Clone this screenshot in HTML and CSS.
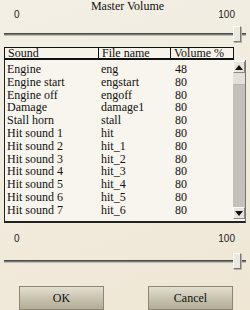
FILE: index.html
```html
<!DOCTYPE html>
<html>
<head>
<meta charset="utf-8"/>
<title>Master Volume</title>
<link rel="stylesheet" href="styles.css">
</head>
<body>
<div class="panel">
  <div class="title">Master Volume</div>
  <div class="labels"><span>0</span><span>100</span></div>
  <div class="slider"><div class="track"></div><div class="thumb"></div></div>

  <div class="grid-head">
    <div class="hcell c1">Sound</div>
    <div class="hcell c2">File name</div>
    <div class="hcell c3">Volume %</div>
  </div>
  <div class="grid-body">
    <div class="rows">
      <div class="row"><span class="c1">Engine</span><span class="c2">eng</span><span class="c3">48</span></div>
      <div class="row"><span class="c1">Engine start</span><span class="c2">engstart</span><span class="c3">80</span></div>
      <div class="row"><span class="c1">Engine off</span><span class="c2">engoff</span><span class="c3">80</span></div>
      <div class="row"><span class="c1">Damage</span><span class="c2">damage1</span><span class="c3">80</span></div>
      <div class="row"><span class="c1">Stall horn</span><span class="c2">stall</span><span class="c3">80</span></div>
      <div class="row"><span class="c1">Hit sound 1</span><span class="c2">hit</span><span class="c3">80</span></div>
      <div class="row"><span class="c1">Hit sound 2</span><span class="c2">hit_1</span><span class="c3">80</span></div>
      <div class="row"><span class="c1">Hit sound 3</span><span class="c2">hit_2</span><span class="c3">80</span></div>
      <div class="row"><span class="c1">Hit sound 4</span><span class="c2">hit_3</span><span class="c3">80</span></div>
      <div class="row"><span class="c1">Hit sound 5</span><span class="c2">hit_4</span><span class="c3">80</span></div>
      <div class="row"><span class="c1">Hit sound 6</span><span class="c2">hit_5</span><span class="c3">80</span></div>
      <div class="row"><span class="c1">Hit sound 7</span><span class="c2">hit_6</span><span class="c3">80</span></div>
    </div>
    <div class="scrollbar">
      <div class="arrow"><svg width="8" height="5" viewBox="0 0 8 5"><path d="M0 5 L4 0 L8 5 Z" fill="#111"/></svg></div>
      <div class="sthumb"></div>
      <div class="strack"></div>
      <div class="arrow"><svg width="8" height="5" viewBox="0 0 8 5"><path d="M0 0 L8 0 L4 5 Z" fill="#111"/></svg></div>
    </div>
  </div>

  <div class="labels low"><span>0</span><span>100</span></div>
  <div class="slider low"><div class="track"></div><div class="thumb"></div></div>

  <div class="buttons">
    <div class="button">OK</div>
    <div class="button">Cancel</div>
  </div>
</div>
</body>
</html>
```

FILE: styles.css
```css
body {
  margin: 0;
  width: 250px;
  height: 310px;
  overflow: hidden;
  background: linear-gradient(160deg, #f3efe5 0%, #f1ebdd 55%, #efe6d4 100%);
  font-family: "Liberation Serif", "Times New Roman", serif;
  font-size: 12px;
  color: #111;
}

.panel {
  padding: 0 4px;
}

.title {
  height: 10px;
  line-height: 12px;
  text-align: center;
  padding-left: 5px;
}

.labels {
  display: flex;
  justify-content: space-between;
  padding: 0 11px 0 10px;
  font-family: "Liberation Sans", Arial, sans-serif;
  font-size: 10px;
  line-height: 9px;
  height: 9px;
  color: #222;
}

.labels.low {
  margin-top: 11px;
}

.slider {
  display: grid;
  align-items: center;
  height: 16px;
  margin-top: 7px;
}

.slider.low {
  margin-top: 10px;
}

.track, .thumb {
  grid-area: 1 / 1;
}

.track {
  height: 1px;
  background: #7d7b76;
  border-top: 1px solid #4a4a4a;
  border-bottom: 1px solid #bdbab1;
}

.thumb {
  justify-self: end;
  margin-right: 5px;
  width: 6px;
  height: 14px;
  background: #ebe8df;
  border: 1px solid;
  border-color: #fff #7a7872 #7a7872 #fff;
  box-shadow: 1px 1px 0 #b5b2aa;
}

.grid-head {
  display: flex;
  margin-top: 5px;
}

.hcell {
  border-top: 1px solid #111;
  border-bottom: 2px solid #111;
  border-right: 1px solid #111;
  background: #f6f3ea;
  height: 10px;
  line-height: 11px;
  padding-left: 3px;
}

.hcell.c1 {
  width: 90px;
  border-left: 1px solid #111;
}

.hcell.c2 {
  width: 68px;
}

.hcell.c3 {
  width: 59px;
}

.grid-body {
  display: flex;
  height: 161px;
  border-left: 1px solid #222;
  border-right: 1px solid #777;
  border-bottom: 2px solid #222;
  background: #f8f5ee;
}

.rows {
  flex: 1;
  padding-top: 3px;
}

.row {
  display: grid;
  grid-template-columns: 93px 72px 63px;
  height: 12.8px;
  line-height: 12.8px;
  white-space: nowrap;
}

.row .c1 {
  padding-left: 2px;
}

.row .c2 {
  padding-left: 3px;
}

.row .c3 {
  padding-left: 5px;
}

.scrollbar {
  display: flex;
  flex-direction: column;
  width: 12px;
  margin-top: 1px;
  margin-bottom: 2px;
  background: #c3c1b9;
}

.arrow {
  display: flex;
  align-items: center;
  justify-content: center;
  height: 12px;
  background: #e6e4dc;
  border: 1px solid;
  border-color: #fff #8a8882 #8a8882 #fff;
  box-sizing: border-box;
}

.sthumb {
  height: 11px;
  background: #e2e0d8;
  border-bottom: 1px solid #b4b2aa;
}

.strack {
  flex: 1;
}

.buttons {
  display: flex;
  gap: 44px;
  padding-left: 15px;
  margin-top: 17px;
}

.button {
  width: 83px;
  height: 22px;
  line-height: 22px;
  text-align: center;
  background: linear-gradient(#e3dfd0, #c4bfaa 60%, #b3ad96);
  border: 1px solid #8b8676;
  color: #111;
}
```
